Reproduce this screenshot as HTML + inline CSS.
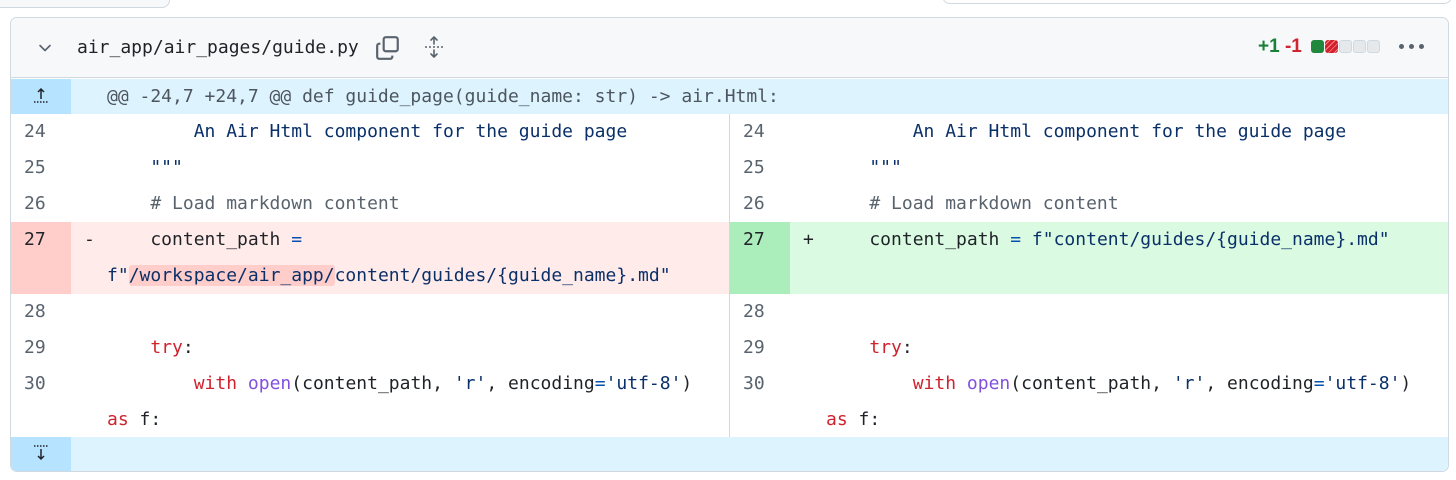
<!DOCTYPE html>
<html><head><meta charset="utf-8"><style>
*{margin:0;padding:0;box-sizing:border-box}
body{width:1456px;height:480px;background:#fff;position:relative;overflow:hidden;font-family:"DejaVu Sans Mono","Liberation Mono",monospace}
.top1{position:absolute;left:-20px;top:-30px;width:190px;height:38px;border:1px solid #d1d9e0;border-radius:8px;background:#f6f8fa}
.top2{position:absolute;left:942px;top:-30px;width:510px;height:34px;border:1px solid #d1d9e0;border-radius:8px}
.card{position:absolute;left:10px;top:17px;width:1439px;height:455px;border:1px solid #d1d9e0;border-radius:7px;overflow:hidden}
.hdr{position:absolute;left:0;top:0;width:100%;height:60px;background:#f6f8fa;border-bottom:1px solid #d1d9e0}
.fn{position:absolute;left:66px;top:19px;font-size:18px;color:#1f2328}
.row{position:absolute;height:36px}
.g{position:absolute;width:60px;font-size:18px;color:#59636e;padding-left:13px;line-height:36px}
.c{position:absolute;font-size:18px;color:#1f2328;line-height:36px;white-space:pre}
.s{color:#0a3069}.k{color:#cf222e}.f{color:#8250df}.o{color:#0550ae}.cm{color:#59636e}
.hl{background:#ffcecb;border-radius:3px}
</style></head><body>
<div class="top1"></div><div class="top2"></div>
<div class="card">
 <div class="hdr">
  <svg style="position:absolute;left:26px;top:22px" width="16" height="16" viewBox="0 0 16 16"><path d="M3 5.5l5 5 5-5" fill="none" stroke="#59636e" stroke-width="1.6" stroke-linecap="round" stroke-linejoin="round"/></svg>
  <div class="fn">air_app/air_pages/guide.py</div>
  <svg style="position:absolute;left:364px;top:17px" width="26" height="26" viewBox="0 0 24 24"><rect x="8" y="2" width="13" height="13" rx="2" fill="none" stroke="#59636e" stroke-width="2"/><path d="M5 8H4a2 2 0 0 0-2 2v10a2 2 0 0 0 2 2h10a2 2 0 0 0 2-2v-1" fill="none" stroke="#59636e" stroke-width="2"/></svg>
  <svg style="position:absolute;left:412px;top:17px" width="22" height="24" viewBox="0 0 22 24"><path d="M11 2v7M8 5l3-3 3 3M11 22v-7M8 19l3 3 3-3" fill="none" stroke="#59636e" stroke-width="1.6" stroke-linecap="round" stroke-linejoin="round"/><path d="M2 12h18" stroke="#59636e" stroke-width="1.6" stroke-dasharray="2 2"/></svg>
  <div style="position:absolute;left:1247px;top:18px;font-family:'Liberation Sans',sans-serif;font-size:19px;font-weight:bold"><span style="color:#1a7f37">+1</span> <span style="color:#d1242f">-1</span></div>
  <div style="position:absolute;left:1300px;top:22px;display:flex;gap:1px">
   <div style="width:13px;height:13px;border-radius:3px;background:#1f883d"></div>
   <div style="width:13px;height:13px;border-radius:3px;background:repeating-linear-gradient(135deg,#cf222e 0 3px,#ff8182 3px 4px)"></div>
   <div style="width:13px;height:13px;border-radius:3px;background:#e6e9ec;border:1px solid #d1d9e0"></div>
   <div style="width:13px;height:13px;border-radius:3px;background:#e6e9ec;border:1px solid #d1d9e0"></div>
   <div style="width:13px;height:13px;border-radius:3px;background:#e6e9ec;border:1px solid #d1d9e0"></div>
  </div>
  <div style="position:absolute;left:1388px;top:26px;display:flex;gap:5px"><i style="width:5px;height:5px;border-radius:50%;background:#59636e"></i><i style="width:5px;height:5px;border-radius:50%;background:#59636e"></i><i style="width:5px;height:5px;border-radius:50%;background:#59636e"></i></div>
 </div>
 <div class="row" style="top:61px;left:0;width:100%;height:35px;background:#ddf4ff"></div>
 <div class="row" style="top:61px;left:0;width:60px;height:35px;background:#b6e3ff"></div>
 <svg style="position:absolute;left:21px;top:67px" width="18" height="20" viewBox="0 0 18 20"><path d="M9 14V4M6 7l3-3 3 3" fill="none" stroke="#1f2328" stroke-width="1.5"/><path d="M2 17h14" stroke="#1f2328" stroke-width="1.5" stroke-dasharray="1.5 1.5"/></svg>
 <div class="c" style="top:61px;left:96px;color:#4d555e;line-height:35px">@@ -24,7 +24,7 @@ def guide_page(guide_name: str) -&gt; air.Html:</div>
 <div style="position:absolute;left:718px;top:96px;width:1px;height:323px;background:#d1d9e0"></div>
 <div class="row" style="top:204px;left:0;width:718px;height:72px;background:#ffebe9"></div>
 <div class="row" style="top:204px;left:0;width:60px;height:72px;background:#ffcecb"></div>
 <div class="row" style="top:204px;left:719px;width:720px;height:72px;background:#dafbe1"></div>
 <div class="row" style="top:204px;left:719px;width:60px;height:72px;background:#aceebb"></div>
 <div class="g" style="left:0;top:96px">24</div><div class="c s" style="left:96px;top:96px">        An Air Html component for the guide page</div>
 <div class="g" style="left:0;top:132px">25</div><div class="c s" style="left:96px;top:132px">    """</div>
 <div class="g" style="left:0;top:168px">26</div><div class="c cm" style="left:96px;top:168px">    # Load markdown content</div>
 <div class="g" style="left:0;top:204px;color:#1f2328">27</div><div class="c" style="left:73px;top:204px">-</div><div class="c" style="left:96px;top:204px">    content_path <span class="o">=</span></div>
 <div class="c s" style="left:96px;top:240px"><span>f"</span><span class="hl">/workspace/air_app/</span>content/guides/{guide_name}.md"</div>
 <div class="g" style="left:0;top:276px">28</div>
 <div class="g" style="left:0;top:312px">29</div><div class="c" style="left:96px;top:312px">    <span class="k">try</span>:</div>
 <div class="g" style="left:0;top:348px">30</div><div class="c" style="left:96px;top:348px">        <span class="k">with</span> <span class="f">open</span>(content_path, <span class="s">'r'</span>, encoding<span class="o">=</span><span class="s">'utf-8'</span>)</div>
 <div class="c" style="left:96px;top:384px"><span class="k">as</span> f:</div>
 <div class="g" style="left:719px;top:96px">24</div><div class="c s" style="left:815px;top:96px">        An Air Html component for the guide page</div>
 <div class="g" style="left:719px;top:132px">25</div><div class="c s" style="left:815px;top:132px">    """</div>
 <div class="g" style="left:719px;top:168px">26</div><div class="c cm" style="left:815px;top:168px">    # Load markdown content</div>
 <div class="g" style="left:719px;top:204px;color:#1f2328">27</div><div class="c" style="left:792px;top:204px">+</div><div class="c" style="left:815px;top:204px">    content_path <span class="o">=</span> <span class="s">f"content/guides/{guide_name}.md"</span></div>
 <div class="g" style="left:719px;top:276px">28</div>
 <div class="g" style="left:719px;top:312px">29</div><div class="c" style="left:815px;top:312px">    <span class="k">try</span>:</div>
 <div class="g" style="left:719px;top:348px">30</div><div class="c" style="left:815px;top:348px">        <span class="k">with</span> <span class="f">open</span>(content_path, <span class="s">'r'</span>, encoding<span class="o">=</span><span class="s">'utf-8'</span>)</div>
 <div class="c" style="left:815px;top:384px"><span class="k">as</span> f:</div>
 <div class="row" style="top:419px;left:0;width:100%;height:36px;background:#ddf4ff"></div>
 <div class="row" style="top:419px;left:0;width:60px;height:36px;background:#b6e3ff"></div>
 <svg style="position:absolute;left:21px;top:425px" width="18" height="20" viewBox="0 0 18 20"><path d="M2 3h14" stroke="#1f2328" stroke-width="1.5" stroke-dasharray="1.5 1.5"/><path d="M9 6v10M6 13l3 3 3-3" fill="none" stroke="#1f2328" stroke-width="1.5"/></svg>
</div>
</body></html>
